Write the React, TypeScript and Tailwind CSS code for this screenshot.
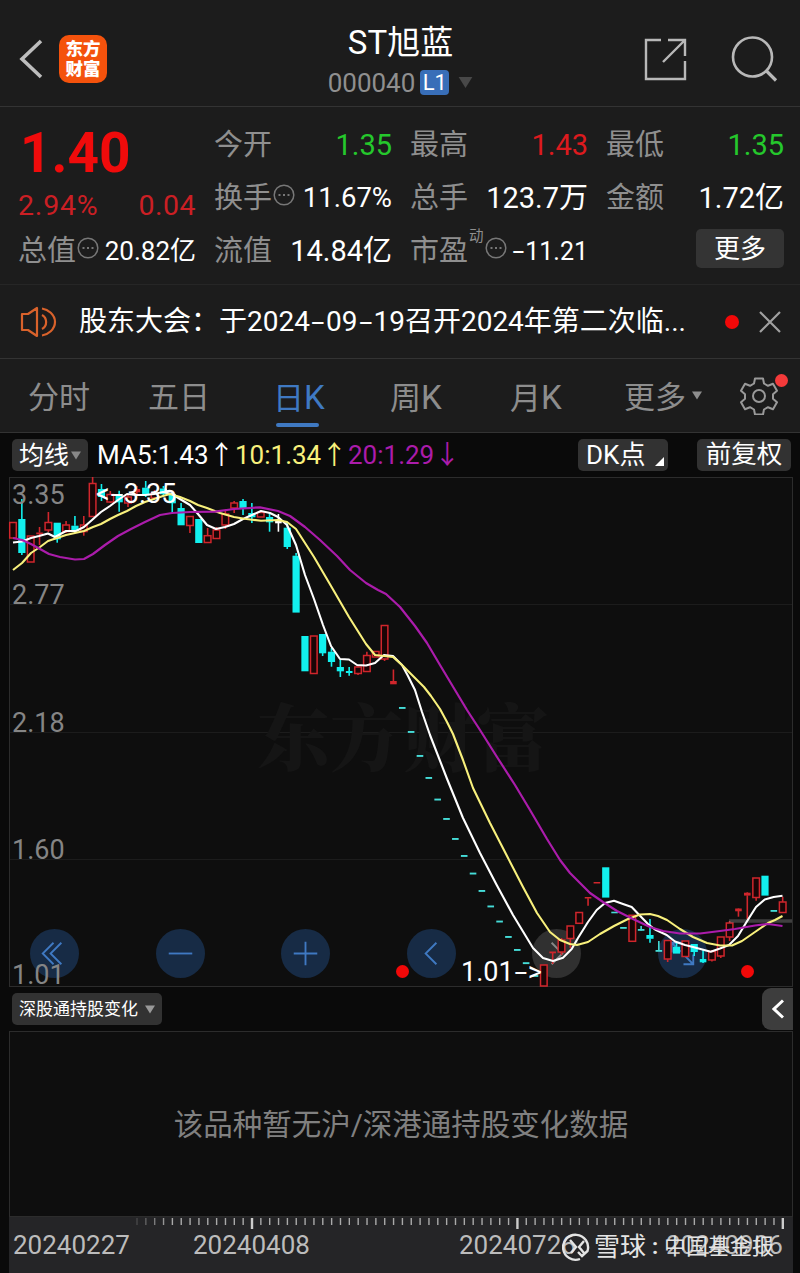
import React from "react";

type Candle = [kind: "r" | "c" | "w", top: number, bottom: number, high?: number, low?: number];

const candles: Candle[] = [
  ["r", 522.5, 538], ["c", 519, 552.7, 499, 555], ["r", 536, 562], ["r", 532.5, 534, 527, 545],
  ["r", 522.5, 530, 512, 532], ["c", 522.7, 539, 522.7, 542.7], ["r", 525, 531.5, 521, 533], ["c", 525.7, 530.7, 516, 533],
  ["r", 525, 531.5, 516, 535.7], ["r", 483.5, 516.5, 477, 516], ["c", 489, 496.7, 484, 501], ["r", 494.5, 502, 491, 503],
  ["c", 494, 502, 490.7, 511.7], ["r", 497, 503, 494, 507], ["r", 489, 492, 486, 494], ["c", 487.7, 495, 481, 497],
  ["r", 493, 498, 490, 499], ["c", 488.5, 494, 486, 496], ["c", 494, 503, 492, 513], ["c", 508, 525, 503, 525],
  ["r", 516.5, 525.5, 516, 533], ["c", 519, 542.7], ["r", 535.7, 542.5, 528, 543], ["r", 530, 538.5, 527, 539],
  ["r", 514, 525, 511, 529], ["r", 503, 508, 501, 513], ["c", 501, 507.7, 499, 515], ["c", 513, 517, 503, 523],
  ["r", 512.5, 517], ["c", 517, 522, 513, 531.7], ["w", 521, 523, 514, 531.7], ["c", 527.7, 546.7, 521.7, 549],
  ["c", 555.7, 612.3, 553, 612], ["c", 636, 671], ["r", 636, 673.5], ["c", 634, 653, 634, 656],
  ["c", 651.7, 661.7, 648, 666.7], ["c", 667, 671, 660, 677], ["c", 671, 672.7, 667, 675.7], ["r", 667, 673.5, 665, 675],
  ["r", 655.5, 671.5, 651.7, 671.5], ["r", 651.5, 657], ["r", 625.5, 659, 625, 661], ["r", 681, 684, 669.5, 684],
  ["c", 707, 708.6], ["c", 731, 732.6], ["c", 755, 756.6], ["c", 777, 778.6],
  ["c", 798.6, 800.2], ["c", 818, 819.6], ["c", 838, 839.6], ["c", 855, 856.6],
  ["c", 872.6, 874.2], ["c", 890, 891.6], ["c", 905.5, 907.1], ["c", 920.6, 922.2],
  ["c", 936, 937.6], ["c", 949, 950.6], ["c", 962.2, 963.8], ["c", 975, 976.6],
  ["r", 965, 986], ["r", 951.5, 953, 951.5, 964], ["r", 940, 952, 938, 955], ["r", 926, 938.5, 926, 948],
  ["r", 912.5, 923.3], ["r", 897, 898.2, 897, 905.7], ["r", 882, 883.2], ["c", 867.3, 897.3],
  ["c", 911.7, 913], ["c", 927, 928.5], ["r", 915.3, 941.3], ["c", 929, 930.5, 926, 931],
  ["c", 935, 938.5, 919, 942.7], ["c", 950, 951.5, 941, 951.5], ["r", 940.5, 959, 940, 962], ["c", 946.7, 953.3, 943, 953],
  ["r", 941, 956.5], ["c", 944, 951.7, 944, 956], ["c", 959, 962, 950, 963], ["r", 951.5, 960, 950, 961.5],
  ["r", 937, 956, 937, 958], ["r", 923, 937, 921, 941], ["r", 908.5, 911, 908, 916.7], ["r", 892.7, 895.3, 892, 919],
  ["r", 878, 897.5, 878, 900.7], ["c", 875.7, 895.3], ["c", 910, 911.5], ["r", 902, 912.5, 896.7, 912.5],
];

const ma5 =
  "13,542.5 22,541.5 31,538 39,536 48,533.5 55,537 66,531 76,531 84,527 92,520 101,512 110,506 118,500 127,494 136,495 145,495 154,494 163,492 172,494 180,499 190,505 198,514 207,525 216,529 225,527 234,524 243,519 252,515 261,511 270,513 278,517 287,525 296,545 305,575 314,599 323,625 331,646 340,659 349,659.5 357,665 366,665.5 375,663 384,655 393,656 402,665 408,676 415,690 422,712 430,735 446.7,778 463,818 480,853 496.7,885 513,915 533,948 543,958 553,961 563,957.7 571.7,949 578,938 588,922 596.7,910 605,903 614,900.7 623,904 631.7,907 640,915.7 648,924 655,929.5 666.7,935 675,941.5 685,945 693,947 710.7,951.7 720,948.5 729,945 738,936 746.7,921.7 756,907 764.7,899.5 773.7,897 782.5,895.7";
const ma10 =
  "13,570 22,563 31,553 40,547 48,541 57,538 66,535 75,533 84,531 93,527 101,524 110,519 118,515 127,511 136,506 145,502 154,499 163,496 170,494 180,497 190,501 198,505 207,508 220,513 234,517 243,518.5 252,519.7 261,520.7 278,520 287,522 296,529 305,543 314,557 331,586 349,617 366,644 375,655 384,656 393,657 402,665 411,674 424,687 431,696 440,709 447,722 453,734 463,760 473,788 490,823 507,856 523,887 537,913 550,932 560,940 570,944 577,945 588,942 600,934 614,926 628,919 640,914.5 650,914 658,916 667,920 680,929 693,937 707,943 720,945.5 732,945.5 742,941 755,932 768,923 775,920 782.5,916";
const ma20 =
  "13,538 22,540 31,544 40,549 49,554 60,557 75,559.5 84,559 93,554 105,545 118,536 131,529 145,522 160,515 172,513 190,512 215,511.7 234,509 260,507.3 278,511 290,516 305,527 320,540 337,556 350,570 366,583 378,590 386,594 400,607 415,626 427,643 440,665 455,690 467,710 480,730 497,757 515,785 530,810 547,839 560,860 570,873 580,883 590,893 603,902 617,911 633,919 650,927 663,931 680,933.5 700,933.5 720,931 735,929 755,925.5 768,924 782.5,926";

const colors = { r: "#d0262c", c: "#12f0ee", w: "#ffffff" };

function KLine() {
  return (
    <svg className="absolute inset-0" width="800" height="510" viewBox="0 477 800 510" fill="none">
      {candles.map(([kind, top, bottom, high, low], i) => {
        const x = 13 + i * 8.847;
        const h = bottom - top;
        const flat = h < 3.2;
        const half = kind === "c" && !flat ? 3.6 : 3.3;
        const color = kind === "c" && h < 1.65 ? "#45dcd8" : colors[kind];
        return (
          <g key={i}>
            {high !== undefined && high < top && <line x1={x} x2={x} y1={high} y2={top} stroke={color} strokeWidth="1.6" />}
            {low !== undefined && low > bottom && <line x1={x} x2={x} y1={bottom} y2={low} stroke={color} strokeWidth="1.6" />}
            {kind === "r" && !flat ? (
              <rect x={x - half} y={top} width={half * 2} height={h} fill="#1a0506" stroke={color} strokeWidth="1.5" />
            ) : (
              <rect x={x - half} y={top} width={half * 2} height={h + 0.3} fill={color} />
            )}
          </g>
        );
      })}
      <line x1="729" x2="792" y1="921" y2="921" stroke="#8a8a8a" strokeOpacity=".4" strokeWidth="3.5" />
      <polyline points={ma5} stroke="#fff" strokeWidth="2.1" strokeLinejoin="round" />
      <polyline points={ma10} stroke="#f8f07c" strokeWidth="2.1" strokeLinejoin="round" />
      <polyline points={ma20} stroke="#ab1cab" strokeWidth="2.2" strokeLinejoin="round" />
    </svg>
  );
}

function Dots() {
  return (
    <svg className="mb-[6px] ml-[1px] shrink-0" width="22" height="22" viewBox="0 0 22 22" fill="none" stroke="#777" strokeWidth="1.5">
      <circle cx="11" cy="11" r="9.8" />
      <path d="M5.500 11h2M10 11h2M14.500 11h2" strokeWidth="2" />
    </svg>
  );
}

function Hyphen({ className }: { className: string }) {
  return (
    <span className={`inline-block text-center ${className}`}>
      <span className="inline-block scale-x-[1.7]">-</span>
    </span>
  );
}

type CellProps = { label: string; value: React.ReactNode; tone?: string; extra?: React.ReactNode; size?: string };

function Cell({ label, value, tone = "text-white", extra, size = "text-[29px]" }: CellProps) {
  return (
    <div className="flex h-[53px] items-center justify-between pt-[1px] whitespace-nowrap">
      <div className="flex items-center text-[29px] text-[#8f8f8f]">
        {label}
        {extra}
      </div>
      <span className={`${size} ${tone}`}>{value}</span>
    </div>
  );
}

function Caret({ className }: { className: string }) {
  return (
    <svg className={className} viewBox="0 0 10 8">
      <path d="M0 0h10L5 8z" fill="currentColor" />
    </svg>
  );
}

const tools = [
  "M24 14 13 25l11 11M32 14 21 25l11 11",
  "M13 25h24",
  "M13 25h24M25 13v24",
  "M30 14 19 25l11 11",
  "M20 14l11 11-11 11",
  "M14 14l9 9M27 27l9 9M14 24V14h10M36 26v10H26",
];

export default function App() {
  return (
    <div className="h-[1273px] w-[800px] overflow-hidden bg-[#0a0a0a] font-[Roboto,'Noto_Sans_CJK_SC',sans-serif] leading-none text-white">
      <div className="bg-[#1c1c1c]">
        <header className="flex h-[107px] items-center justify-between border-b border-[#333] pr-[22px] pl-[18px]">
          <div className="flex w-[155px] items-center gap-[16px] pt-[11px]">
            <svg width="25" height="42" viewBox="0 0 25 42" fill="none" stroke="#bdbdbd" strokeWidth="3.6">
              <path d="M23 3 4 21l19 18" />
            </svg>
            <div className="flex h-[48px] w-[48px] flex-col items-center justify-center rounded-[10px] bg-[#f4520c] text-[17.5px] leading-[20px] font-black">
              <span>东方</span>
              <span>财富</span>
            </div>
          </div>
          <div className="flex flex-col items-center pt-[19px] pl-[5px]">
            <h1 className="text-[33px] leading-[40px] font-normal">ST旭蓝</h1>
            <div className="flex h-[40px] items-center text-[26px] text-[#8f8f8f]">
              <span>000040</span>
              <span className="ml-[5px] flex h-[25px] w-[29px] items-center justify-center rounded-[4px] bg-[#386eb8] text-[22px] text-white">L1</span>
              <Caret className="ml-[9px] h-[11px] w-[15px] text-[#484848]" />
            </div>
          </div>
          <div className="flex w-[155px] items-center justify-end gap-[43px] pt-[11px]">
            <svg width="44" height="44" viewBox="0 0 44 44" fill="none" stroke="#b8b8b8" strokeWidth="2.4">
              <path d="M18 3H3v39h39V24M25 3h17v16M42 3 20 25" />
            </svg>
            <svg width="48" height="48" viewBox="0 0 48 48" fill="none" stroke="#b8b8b8" strokeWidth="2.600">
              <circle cx="22.5" cy="22" r="19.5" />
              <path d="m36 35.500 10 10" strokeWidth="3.2" />
            </svg>
          </div>
        </header>

        <section className="grid h-[178px] grid-cols-4 gap-x-[18px] border-b border-[#262626] pt-[11px] pr-[16px] pl-[18px]">
          <div>
            <div className="flex h-[71px] items-center pl-[2px] text-[55px] font-bold text-[#f00b0b]">1.40</div>
            <div className="flex h-[35px] items-center justify-between text-[28.5px] text-[#cb1f24]">
              <span className="tracking-[0.8px]">2.94%</span>
              <span className="tracking-[0.5px]">0.04</span>
            </div>
            <Cell label="总值" value="20.82亿" size="text-[26px]" extra={<Dots />} />
          </div>
          <div>
            <Cell label="今开" value="1.35" tone="text-[#25c82c]" />
            <Cell label="换手" value="11.67%" size="text-[27.5px]" extra={<Dots />} />
            <Cell label="流值" value="14.84亿" />
          </div>
          <div>
            <Cell label="最高" value="1.43" tone="text-[#dc1a1e]" />
            <Cell label="总手" value="123.7万" />
            <Cell
              label="市盈"
              value={
                <>
                  <Hyphen className="w-[13px]" />
                  11.21
                </>
              }
              size="text-[25px]"
              extra={
                <>
                  <span className="mb-[28px] ml-[1px] text-[14.500px]">动</span>
                  <Dots />
                </>
              }
            />
          </div>
          <div>
            <Cell label="最低" value="1.35" tone="text-[#25c82c]" />
            <Cell label="金额" value="1.72亿" />
            <div className="flex h-[53px] items-center justify-end pb-[4px]">
              <span className="flex h-[39px] w-[88px] items-center justify-center rounded-[5px] bg-[#343434] text-[26px]">更多</span>
            </div>
          </div>
        </section>

        <section className="flex h-[74px] items-center border-b border-[#333] pr-[19px] pl-[20px]">
          <svg width="38" height="32" viewBox="0 0 38 32" fill="none" stroke="#d9622b" strokeWidth="2.2" strokeLinejoin="round">
            <path d="M2 8h6l9-6v28l-9-6H2zM22 9a8 8 0 0 1 0 14M22 2.500c6 1 13 6 13 13.500s-7 12.500-13 13.500" />
          </svg>
          <span className="ml-[21px] w-[646px] whitespace-nowrap text-[28px]">
            股东大会：于2024
            <Hyphen className="w-[16px]" />
            09
            <Hyphen className="w-[16px]" />
            19召开2024年第二次临...
          </span>
          <span className="h-[14px] w-[14px] shrink-0 rounded-full bg-[#f20808]" />
          <svg className="ml-auto" width="22" height="22" viewBox="0 0 22 22" stroke="#a0a0a0" strokeWidth="2.2">
            <path d="m1 1 20 20M21 1 1 21" />
          </svg>
        </section>

        <nav className="flex h-[74px] items-center border-b border-[#333] pt-[3px] pl-[28px] text-[31px] text-[#8d8d8d]">
          <span className="w-[120px]">分时</span>
          <span className="w-[125px]">五日</span>
          <span className="relative w-[117px] text-[#3f79c2]">
            日<span className="text-[33px]">K</span>
            <i className="absolute top-[42px] left-[3px] h-[4px] w-[43px] rounded-full bg-[#3f79c2]" />
          </span>
          <span className="w-[120px]">
            周<span className="text-[33px]">K</span>
          </span>
          <span className="w-[114px]">
            月<span className="text-[33px]">K</span>
          </span>
          <span>更多</span>
          <Caret className="mb-[3px] ml-[6px] h-[9px] w-[10px]" />
          <div className="relative mb-[3px] ml-[38px]">
            <svg width="38" height="38" viewBox="0 0 38 38" fill="none" stroke="#999" strokeWidth="2" strokeLinejoin="round">
              <path d="M15 1.500h8l1 5 4 2.300 5-2 4 7-4 3.400v4.600l4 3.400-4 7-5-2-4 2.300-1 5h-8l-1-5-4-2.300-5 2-4-7 4-3.400v-4.600l-4-3.400 4-7 5 2 4-2.300z" />
              <circle cx="19" cy="19" r="6" />
            </svg>
            <i className="absolute -top-[3px] left-[35px] h-[13px] w-[13px] rounded-full bg-[#f43a3a]" />
          </div>
        </nav>
      </div>

      <div className="flex h-[44px] items-center pr-[9px] pl-[12px] text-[26px] whitespace-nowrap">
        <div className="flex h-[32px] w-[76px] items-center justify-center gap-[2px] rounded-[5px] bg-[#323232] text-[25px]">
          均线
          <Caret className="h-[9px] w-[10px] text-[#888]" />
        </div>
        <span className="ml-[9px] w-[138px]">MA5:1.43↑</span>
        <span className="w-[113px] text-[#f8f07c]">10:1.34↑</span>
        <span className="text-[#ab1cab]">20:1.29↓</span>
        <div className="relative ml-auto flex h-[32px] w-[90px] items-center rounded-[5px] bg-[#323232] pl-[8px] text-[26px]">
          DK点
          <svg className="absolute right-[4px] bottom-[5px]" width="9" height="9">
            <path d="M9 0v9H0z" fill="#fff" />
          </svg>
        </div>
        <div className="ml-[29px] flex h-[32px] w-[94px] items-center justify-center rounded-[5px] bg-[#323232] text-[25.500px]">前复权</div>
      </div>

      <div className="relative h-[510px]">
        <div className="mr-[7px] ml-[9px] flex h-[510px] flex-col border border-[#2c2c2c] bg-[#0e0e0e]">
          <div className="h-[127px] border-b border-[#1c1c1c]" />
          <div className="h-[128px] border-b border-[#1c1c1c]" />
          <div className="h-[127px] border-b border-[#1c1c1c]" />
        </div>
        <div className="absolute top-[220px] left-[257px] font-['Noto_Serif_CJK_SC','Noto_Sans_CJK_SC',serif] text-[73px] font-black text-[#151515]">东方财富</div>
        <div className="absolute top-[452px] left-[30px] flex gap-[76.500px]">
          {tools.map((d, i) => (
            <div key={d} className={i === 4 ? "h-[49px] w-[49px] rounded-full bg-[#303030]" : "h-[49px] w-[49px] rounded-full bg-[#172b45]"}>
              <svg width="49" height="49" viewBox="0 0 50 50" fill="none" stroke={i === 4 ? "#888" : "#3f79c2"} strokeWidth="1.9">
                <path d={d} />
              </svg>
            </div>
          ))}
        </div>
        <KLine />
        <span className="absolute top-[5px] left-[12px] text-[27px] text-[#858585]">3.35</span>
        <span className="absolute top-[105px] left-[12px] text-[27px] text-[#858585]">2.77</span>
        <span className="absolute top-[233px] left-[12px] text-[27px] text-[#858585]">2.18</span>
        <span className="absolute top-[360px] left-[12px] text-[27px] text-[#858585]">1.60</span>
        <span className="absolute top-[485px] left-[12px] text-[27px] text-[#858585]">1.01</span>
        <span className="absolute top-[4px] left-[96px] whitespace-nowrap text-[27px]">
          &lt;
          <Hyphen className="w-[14px]" />
          3.35
        </span>
        <span className="absolute top-[482px] left-[461px] whitespace-nowrap text-[27px]">
          1.01
          <Hyphen className="w-[14px]" />
          &gt;
        </span>
        <i className="absolute top-[488px] left-[396px] h-[13px] w-[13px] rounded-full bg-[#f20808]" />
        <i className="absolute top-[488px] left-[741px] h-[13px] w-[13px] rounded-full bg-[#f20808]" />
      </div>

      <div className="mr-[7px] flex h-[44px] items-center justify-between pl-[12px]">
        <div className="flex h-[32px] w-[150px] items-center gap-[7px] rounded-[5px] bg-[#323232] pl-[7px] text-[17px]">
          深股通持股变化
          <Caret className="h-[9px] w-[10px] text-[#999]" />
        </div>
        <div className="flex h-[42px] w-[31px] items-center justify-center rounded-l-[9px] bg-[#3d3d3d]">
          <svg width="12" height="20" viewBox="0 0 12 20" fill="none" stroke="#fff" strokeWidth="3">
            <path d="m11 1.500-9 8.500 9 8.500" />
          </svg>
        </div>
      </div>

      <div className="mr-[7px] ml-[9px] flex h-[186px] items-center justify-center border border-[#2c2c2c] bg-[#0e0e0e] pt-[3px] text-[29.500px] text-[#808080]">
        该品种暂无沪/深港通持股变化数据
      </div>

      <footer className="relative mr-[7px] ml-[9px] h-[56px] bg-[#252527]">
        <svg className="block" width="784" height="13" viewBox="9 1217 784 13">
          {Array.from({ length: 74 }, (_, i) => {
            const major = i === 13 || i === 43 || i === 73;
            return (
              <line
                key={i}
                x1={137 + i * 8.847}
                x2={137 + i * 8.847}
                y1="1218"
                y2={major ? 1229 : 1225}
                stroke={major ? "#ccc" : "#aaa"}
                strokeWidth={major ? 2.4 : 1.4}
                opacity={Math.min(1, 0.25 + i * 0.2)}
              />
            );
          })}
        </svg>
        <div className="flex pt-[2px] text-[26px] leading-[26px] text-[#bcbcbc]">
          <span className="w-[180px] pl-[4px]">20240227</span>
          <span className="w-[265px] pl-[4px]">20240408</span>
          <span className="w-[207px] pl-[5px]">20240726</span>
          <span className="pl-[5px]">20240906</span>
        </div>
        <div className="absolute top-[15px] left-[553px] flex items-center whitespace-nowrap text-[#e4e4e4]">
          <svg width="28" height="30" viewBox="0 0 28 30" fill="none" stroke="#e4e4e4" strokeWidth="2.4">
            <path d="M18 27A12.500 12.500 0 1 1 25.500 19L20 24l-4-4M8 8l6 7-5 6M22 9l-5 6 5 6" />
          </svg>
          <span className="ml-[4px] text-[26px]">雪球</span>
          <span className="mx-[2px] w-[14px] text-center text-[22px] font-bold">:</span>
          <span className="text-[22px]">中国基金报</span>
        </div>
      </footer>
    </div>
  );
}
